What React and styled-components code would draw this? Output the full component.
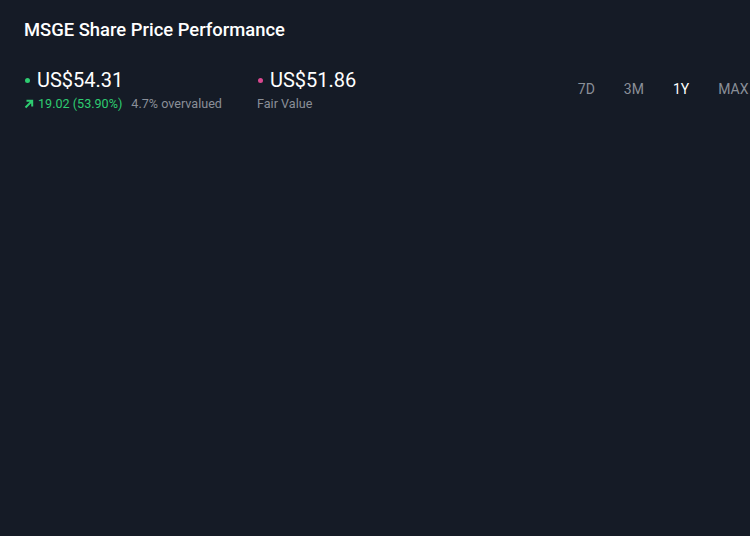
import styled, { createGlobalStyle } from 'styled-components'

const Global = createGlobalStyle`
  body {
    margin: 0;
    background: #151b26;
    font-family: Roboto, "Noto Sans", sans-serif;
  }
`

const ranges = ['7D', '3M', '1Y', 'MAX']

function App() {
  return (
    <Page>
      <Global />
      <Title>MSGE Share Price Performance</Title>
      <Header>
        <Stat $width={233}>
          <Price>
            <Dot color="#2ecc71" />
            US$54.31
          </Price>
          <Sub>
            <Change>
              <svg width="10" height="10" viewBox="0 0 10 10">
                <path d="M1.5 8.5 L8 2 M2.5 1.8 H8.2 V7.5" stroke="currentColor" strokeWidth="2" fill="none" />
              </svg>
              19.02 (53.90%)
            </Change>
            <span>4.7% overvalued</span>
          </Sub>
        </Stat>
        <Stat>
          <Price>
            <Dot color="#d9488f" />
            US$51.86
          </Price>
          <Sub>Fair Value</Sub>
        </Stat>
        <Tabs>
          {ranges.map(r => (
            <Tab key={r} $active={r === '1Y'}>{r}</Tab>
          ))}
        </Tabs>
      </Header>
    </Page>
  )
}

const Page = styled.div`
  width: 750px;
  height: 536px;
  overflow: hidden;
  padding: 19px 0 0 24px;
  box-sizing: border-box;
  color: #fff;
`

const Title = styled.h2`
  margin: 0;
  font-size: 18.4px;
  font-weight: 500;
  line-height: 22px;
`

const Header = styled.div`
  display: flex;
  align-items: flex-start;
  margin-top: 27px;
`

const Stat = styled.div`
  display: flex;
  flex-direction: column;
  width: ${p => (p.$width ? `${p.$width}px` : 'auto')};
  flex-shrink: 0;
`

const Price = styled.div`
  display: flex;
  align-items: center;
  font-size: 20px;
  line-height: 24px;
  color: #fff;
`

const Dot = styled.span`
  width: 5px;
  height: 5px;
  border-radius: 50%;
  background: ${p => p.color};
  margin: 0 7px 0 1px;
`

const Sub = styled.div`
  display: flex;
  gap: 9px;
  font-size: 12.6px;
  line-height: 16px;
  margin-top: 4px;
  color: #8a8f98;
`

const Change = styled.span`
  display: flex;
  align-items: center;
  gap: 4px;
  color: #2ecc71;
`

const Tabs = styled.div`
  display: flex;
  margin-left: auto;
  margin-top: 12px;
  margin-right: -13px;
`

const Tab = styled.div`
  font-size: 14px;
  line-height: 18px;
  padding: 0 14.5px;
  white-space: nowrap;
  color: ${p => (p.$active ? '#fff' : '#8a8f98')};
`

export default App
